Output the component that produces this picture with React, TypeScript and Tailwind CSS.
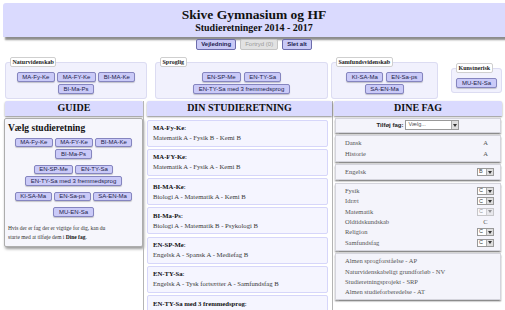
import type { ReactNode } from "react";

const sans = "font-['Liberation_Sans',Arial,sans-serif]";

const categories = [
  { name: "Naturvidenskab", box: "ml-[5px] w-[142px]", items: ["MA-Fy-Ke", "MA-FY-Ke", "BI-MA-Ke", "BI-Ma-Ps"] },
  { name: "Sproglig", box: "ml-[8px] w-[173px]", items: ["EN-SP-Me", "EN-TY-Sa", "EN-TY-Sa med 3 fremmedsprog"] },
  { name: "Samfundsvidenskab", box: "ml-[3px] w-[107px]", items: ["KI-SA-Ma", "EN-Sa-ps", "SA-EN-Ma"] },
  { name: "Kunstnerisk", box: "ml-[13px] w-[51px]", items: ["MU-EN-Sa"] },
];

const retninger = [
  { code: "MA-Fy-Ke", fag: "Matematik A - Fysik B - Kemi B" },
  { code: "MA-FY-Ke", fag: "Matematik A - Fysik A - Kemi B" },
  { code: "BI-MA-Ke", fag: "Biologi A - Matematik A - Kemi B" },
  { code: "BI-Ma-Ps", fag: "Biologi A - Matematik B - Psykologi B" },
  { code: "EN-SP-Me", fag: "Engelsk A - Spansk A - Mediefag B" },
  { code: "EN-TY-Sa", fag: "Engelsk A - Tysk fortsætter A - Samfundsfag B" },
  { code: "EN-TY-Sa med 3 fremmedsprog", fag: "Engelsk A - Tysk fortsætter A - Spansk A" },
];

type Fag = { name: string; level: string; select?: boolean; disabled?: boolean };

const fagGroups: Fag[][] = [
  [
    { name: "Dansk", level: "A" },
    { name: "Historie", level: "A" },
  ],
  [{ name: "Engelsk", level: "B", select: true }],
  [
    { name: "Fysik", level: "C", select: true },
    { name: "Idræt", level: "C", select: true },
    { name: "Matematik", level: "C", select: true, disabled: true },
    { name: "Oldtidskundskab", level: "C" },
    { name: "Religion", level: "C", select: true },
    { name: "Samfundsfag", level: "C", select: true },
  ],
  [
    { name: "Almen sprogforståelse - AP", level: "" },
    { name: "Naturvidenskabeligt grundforløb - NV", level: "" },
    { name: "Studieretningsprojekt - SRP", level: "" },
    { name: "Almen studieforberedelse - AT", level: "" },
  ],
];

function Pill({ label }: { label: string }) {
  return (
    <span
      className={`inline-flex h-[9.5px] items-center whitespace-nowrap rounded-[2px] border border-[#8585bf] bg-[#cacaf8] px-[4.5px] text-[6px] leading-none text-[#1c1c48] shadow-[0_1px_1px_rgba(0,0,0,0.2)] ${sans}`}
    >
      {label}
    </span>
  );
}

function Arrow() {
  return (
    <span className="flex h-full w-[7px] items-center justify-center border-l border-[#aaa] bg-[#dedede]">
      <svg width="4" height="3" viewBox="0 0 4 3">
        <path d="M0 0h4L2 3z" fill="#333" />
      </svg>
    </span>
  );
}

function MiniSelect({ value, disabled }: { value: string; disabled?: boolean }) {
  return (
    <span
      className={`flex h-[8px] w-[17px] items-center border border-[#999] bg-white ${disabled ? "opacity-50" : ""}`}
    >
      <span className={`flex-1 pl-[1px] text-[5.5px] leading-none text-[#444] ${sans}`}>{value}</span>
      <Arrow />
    </span>
  );
}

function ColHeader({ children }: { children: ReactNode }) {
  return (
    <div className="flex h-[15px] items-center justify-center rounded-t-[2px] bg-[#dadafe] text-[10px] font-bold leading-none text-[#111] shadow-[0_1px_2px_rgba(0,0,0,0.45)]">
      {children}
    </div>
  );
}

export default function App() {
  return (
    <div className="min-h-[310px] bg-white font-['Liberation_Serif',serif] text-[#222]">
      <header className="ml-[3px] mt-[3px] flex h-[34px] flex-col items-center rounded-tl-[3px] bg-[#dadafe] pt-[4px] shadow-[2px_3px_2px_rgba(0,0,0,0.45)]">
        <h1 className="text-[13.5px] font-bold leading-[15px] text-[#111]">Skive Gymnasium og HF</h1>
        <h2 className="text-[10px] font-bold leading-[12px] text-[#111]">Studieretninger 2014 - 2017</h2>
      </header>

      <div className={`mt-[2px] flex justify-center gap-[4px] pl-[3px] text-[6px] font-bold ${sans}`}>
        <button type="button" className="h-[11px] rounded-[2px] border border-[#6c6cab] bg-[#c9c9f6] px-[4px] text-[#1c1c50]">
          Vejledning
        </button>
        <button type="button" disabled className="h-[11px] rounded-[2px] border border-[#c4c4c4] bg-[#e2e2e2] px-[4px] font-normal text-[#9a9a9a]">
          Fortryd (0)
        </button>
        <button type="button" className="h-[11px] rounded-[2px] border border-[#6c6cab] bg-[#c9c9f6] px-[4px] text-[#1c1c50]">
          Slet alt
        </button>
      </div>

      <div className="mt-[7px] flex items-center">
        {categories.map((cat) => (
          <fieldset
            key={cat.name}
            className={`${cat.box} rounded-[3px] border border-[#dcdcf2] bg-[#f1f1fd] px-[3px] pb-[4px] pt-[5px]`}
          >
            <legend className="ml-[1px] rounded-[2px] border border-[#cfcfcf] bg-white px-[1.5px] text-[6px] font-bold leading-[8px] text-[#222]">
              {cat.name}
            </legend>
            <div className="flex flex-wrap justify-center gap-[2.5px]">
              {cat.items.map((item) => (
                <Pill key={item} label={item} />
              ))}
            </div>
          </fieldset>
        ))}
      </div>

      <div className="mt-[2px] flex items-start">
        {/* guide */}
        <section className="ml-[4px] w-[139px]">
          <div className="ml-[1px]">
            <ColHeader>GUIDE</ColHeader>
          </div>
          <div className="mt-[2px] rounded-[2px] border border-[#adadad] bg-[#f6f6fc] px-[3px] pb-[4px] pt-[4px] shadow-[1px_2px_3px_rgba(0,0,0,0.4)]">
            <h3 className="text-[9.5px] font-bold leading-[11px] text-[#111]">Vælg studieretning</h3>
            <div className="mt-[4px] flex flex-col gap-[6px]">
              {categories.map((cat) => (
                <div key={cat.name} className="flex flex-wrap justify-center gap-[2px]">
                  {cat.items.map((item) => (
                    <Pill key={item} label={item} />
                  ))}
                </div>
              ))}
            </div>
            <p className="mt-[7px] text-[5.5px] leading-[9px] text-[#333]">
              Hvis der er fag der er vigtige for dig, kan du
              <br />
              starte med at tilføje dem i <b className="text-[#111]">Dine fag</b>.
            </p>
          </div>
        </section>

        {/* din studieretning */}
        <section className="w-[190px] self-stretch border-x border-[#b4b4b4] pl-[3px]">
          <ColHeader>DIN STUDIERETNING</ColHeader>
          <div className="mr-[4px] mt-[4px] flex flex-col gap-[2.3px]">
            {retninger.map((r) => (
              <div
                key={r.code}
                className="h-[27px] shrink-0 rounded-[2px] border border-[#d6d6fa] bg-[#f5f5ff] pl-[5px] pt-[2.5px] text-[6.7px] leading-[10px]"
              >
                <div className="text-[#111]">
                  <b>{r.code}</b>:
                </div>
                <div className="text-[#3a3a3a]">{r.fag}</div>
              </div>
            ))}
          </div>
        </section>

        {/* dine fag */}
        <section className="w-[170px]">
          <div className="mx-[1px]">
            <ColHeader>DINE FAG</ColHeader>
          </div>
          <div className="mx-[2px] mt-[2px] flex flex-col gap-[2.5px]">
            <div className="flex h-[15px] items-center justify-center gap-[2px] border border-[#d4d4dc] bg-[#f4f4fb] shadow-[0_1.5px_1.5px_rgba(0,0,0,0.45)]">
              <span className={`text-[6px] font-bold text-[#222] ${sans}`}>Tilføj fag:</span>
              <span className="flex h-[10px] w-[54px] items-center border border-[#999] bg-white">
                <span className={`flex-1 pl-[2px] text-[5.5px] leading-none text-[#555] ${sans}`}>Vælg...</span>
                <Arrow />
              </span>
            </div>
            {fagGroups.map((group, i) => (
              <div
                key={i}
                className="border border-[#d4d4dc] bg-[#f4f4fb] py-[2px] shadow-[0_1.5px_1.5px_rgba(0,0,0,0.45)]"
              >
                {group.map((fag) => (
                  <div key={fag.name} className="flex h-[10.3px] items-center pl-[9px] pr-[6px] text-[6.5px] text-[#555]">
                    <span className="flex-1">{fag.name}</span>
                    {fag.level && (
                      <span className="flex w-[17px] justify-center">
                        {fag.select ? <MiniSelect value={fag.level} disabled={fag.disabled} /> : fag.level}
                      </span>
                    )}
                  </div>
                ))}
              </div>
            ))}
          </div>
        </section>
      </div>
    </div>
  );
}
